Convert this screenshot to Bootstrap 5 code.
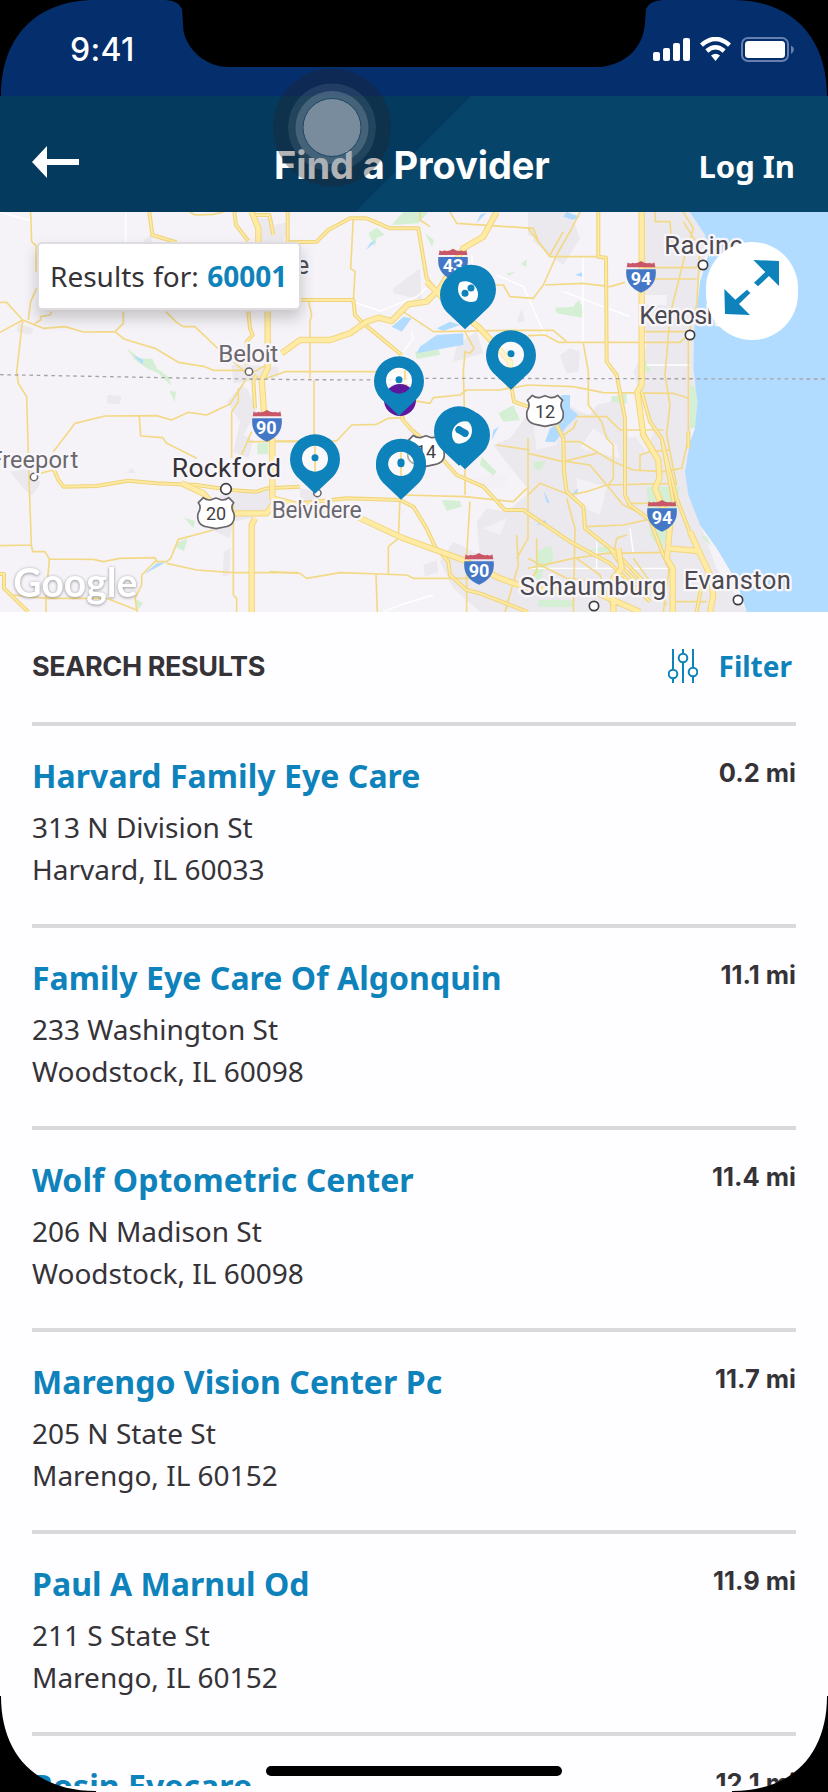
<!DOCTYPE html>
<html lang="en">
<head>
<meta charset="utf-8">
<meta name="viewport" content="width=device-width, initial-scale=1">
<title>Find a Provider</title>
<link href="https://cdn.jsdelivr.net/npm/bootstrap@5.3.0/dist/css/bootstrap.min.css" rel="stylesheet">
<style>
  body { background: #000; color: #353337; font-family: "Noto Sans", sans-serif; }
  .phone { width: 828px; height: 1792px; background: #fefdff; }
  .status { height: 96px; background: #042e6c; color: #fff; flex: none; }
  .clock { font: 500 32px/38px Inter, sans-serif; letter-spacing: .3px; padding: 31px 0 0 70px; }
  .signals { padding: 37px 34px 0 0; box-sizing: content-box; }
  .topbar { height: 116px; flex: none; background: linear-gradient(135deg, transparent 0 50%, #07446a 50%) 356px 0 / 116px 116px no-repeat, linear-gradient(#07446a, #07446a) 471px 0 / 357px 116px no-repeat, #043a5e; color: #fff; padding: 0 33px 0 32px; }
  .page-title { font: 700 38px/46px Inter, sans-serif; letter-spacing: -.1px; padding-top: 46px; margin: 0 0 0 195px; white-space: nowrap; }
  .login { font-weight: 700; font-size: 31px; line-height: 42px; padding-top: 49px; }
  .back { margin-top: 50px; }
  .map { height: 400px; flex: none; }
  .map-label { left: 37px; top: 30px; width: 264px; height: 68px; background: #fff; border: 2px solid #dedcdf; border-radius: 5px; box-shadow: 0 8px 14px rgba(60,60,60,.25); font-size: 28px; line-height: 64px; padding-left: 11px; white-space: nowrap; word-spacing: 1.2px; }
  .expand { left: 706px; top: 30px; width: 92px; height: 98px; border-radius: 46px; background: #fff; border: 0; padding: 0; }
  .accent { color: #0e82ba; }
  .results { height: 1174px; flex: none; padding: 0 32px; }
  .rule { border-bottom: 4px solid #dad9d9; }
  .results-head { height: 114px; }
  .results-title { font: 700 27px/36px Inter, sans-serif; letter-spacing: -.4px; margin: 0; }
  .filter { font-size: 28px; line-height: 40px; font-weight: 700; margin-right: 4px; margin-top: -3px; gap: 21px; }
  .provider { height: 202px; padding-top: 29px; }
  .provider-name { font-size: 32px; line-height: 42px; font-weight: 700; letter-spacing: .05px; color: #0e82ba; margin: 0 0 9px; }
  .provider address { font-size: 28px; line-height: 42px; margin: 0; }
  .distance { font: 700 25.5px/34px Inter, sans-serif; padding-top: 1px; white-space: nowrap; }
  .over { position: absolute; left: 0; top: 0; pointer-events: none; }
  .lbl text { font-family: Roboto, sans-serif; fill: #6a686e; stroke: #f8f6fa; stroke-width: 14px; stroke-linejoin: round; paint-order: stroke; }
  .lbl .city { fill: #4c4a50; }
  .lbl .metro { fill: #353338; }
  .brand { font-family: Lato, sans-serif; font-weight: 700; filter: drop-shadow(0 2px 5px rgba(80,80,90,.65)); }
</style>
</head>
<body>
<div class="phone position-relative overflow-hidden d-flex flex-column">
  <div class="status d-flex justify-content-between align-items-start">
    <div class="clock">9:41</div>
    <svg class="signals" width="141" height="26" viewBox="0 0 141 26" fill="#fff">
      <rect x="0" y="15" width="7" height="9" rx="2"/><rect x="10" y="11" width="7" height="13" rx="2"/><rect x="20" y="6" width="7" height="18" rx="2"/><rect x="30" y="1" width="7" height="23" rx="2"/>
      <g fill="none" stroke="#fff" stroke-width="4.4"><path d="M48.500 8.200Q62.500-4.200 76.500 8.200"/><path d="M53.800 14Q62.500 6.500 71.200 14"/></g>
      <path d="M58 18.600Q62.500 14.800 67 18.600L62.500 24Z"/>
      <rect x="89" y="1" width="46" height="23" rx="6" fill="none" stroke="#667fae" stroke-width="2"/><rect x="92" y="4" width="40" height="17" rx="3.500"/><path d="M138 8.500Q141 10 141 12.500T138 17Z" fill="#667fae"/>
    </svg>
  </div>
  <header class="topbar d-flex align-items-start">
    <svg class="back" width="47" height="34" viewBox="0 0 47 34" fill="#fff"><path d="M0 16L15 0V13H47V19H15V32Z"/></svg>
    <h1 class="page-title">Find a Provider</h1>
    <div class="login ms-auto">Log In</div>
  </header>

  <section class="map position-relative overflow-hidden">
    <svg class="d-block" width="828" height="400" viewBox="0 21 2484 1200" fill="none" stroke-linejoin="round">
      <defs>
        <g id="pin"><path fill-rule="evenodd" fill="#0e82ba" d="M0 105L-54 54A75 75 0 1 1 54 54ZM-39 0A39 39 0 1 0 39 0A39 39 0 1 0-39 0Z"/><circle r="10.500" fill="#0e82ba" cy="-3"/></g>
        <g id="interstate"><path fill="#c95767" d="M-43-28L-40-43Q-33-36-26-42Q-16-36 0-47Q16-36 26-42Q33-36 40-43L43-28Z"/><path fill="#4478c6" d="M-44-22H44Q50 28 0 48Q-50 28-44-22Z"/></g>
        <path id="usroute" fill="#fff" stroke="#68666b" stroke-width="5" d="M-53-33L-38-48Q-29-40-17-41L0-47L17-41Q29-40 38-48L53-33Q42-20 54 0Q60 34 25 40L0 45L-25 40Q-60 34-54 0Q-42-20-53-33Z"/>
        <path id="medium" d="M448 21L457 90L530 112M703 21L708 60L745 108M755 21L760 30H808L820 90M863 21V112L950 110L985 75L1050 40H1100L1170 70H1255L1280 220L1310 260M745 320L750 370L758 390L740 410V480M810 285H1060L1065 330L1090 355L1205 450M1220 495L1205 640L1230 670L1300 730L1330 765L1370 810L1450 845L1515 915H1570L1710 1010L1830 1075L1950 1190M160 790L175 825L190 845L290 843L385 827L470 835L590 840L700 856L770 860L800 850L900 845M770 510L760 525L765 610M0 1107H12V1150L85 1221M900 895L1040 880L1200 885L1240 905L1280 970L1305 1025L1345 1070L1350 1110L1400 1155L1440 1165L1584 1221M1535 550L1542 590L1584 605M1670 660L1690 700L1692 800L1700 860L1750 905L1755 970L1850 1045L1960 1160M1795 21V155L1818 158L1820 470L1850 510L1875 640L1875 870L1890 900L1950 945L1990 1050L2020 1110M1925 560L1950 650L1985 700L2030 880L2080 1010M1985 700L2020 890M2065 680V730M2110 1110L2090 1221M1830 1030L1870 1090L1930 1150"/>
        <path id="motorway" d="M755 21L775 70V112M803 320V490L785 525L792 620M845 445L900 405H990L1050 385L1100 350L1135 338L1175 348L1225 298L1280 290L1320 250L1390 130L1450 95L1490 21M1280 230L1340 290L1440 370L1530 470V550M817 700V880L910 905L1060 930L1210 1000L1390 1065L1500 1120L1584 1150L1700 1160M545 835L610 865L640 900M700 925H800L825 890M765 940L755 960V1221M1925 21V540L1912 560L1930 690L1975 765L1978 820L1965 850L1985 900L2010 960L2005 1020L2000 1060L2018 1090V1221M2070 980L2095 1035L2130 1110L2140 1170L2130 1221M2005 1030L2095 1038M1855 1030L1865 1090L1840 1120V1221M1760 1150L1920 1221"/>
      </defs>
      <rect y="21" width="2484" height="1200" fill="#f5f3f7"/>
      <!-- built-up areas -->
      <g fill="#ebe9ed">
        <path d="M55 355L102 372L92 390L50 380ZM322 570L364 573L360 598L322 595ZM30 800L90 790L122 835L95 872L70 850ZM395 788L408 805L380 805ZM695 480L835 485V515L780 525L700 535ZM745 555L770 620L730 690L760 705L745 760L700 740L720 650L680 590L725 540ZM660 870L810 850L830 880L800 930L700 950L690 1000L625 970ZM672 1040L692 1030L688 1110L668 1115ZM430 110L455 85V115ZM770 40H820V115H770Z"/>
        <path d="M1605 21H1710L1740 100L1690 180L1600 110ZM1180 250L1260 190L1265 285L1180 265ZM1370 420L1430 380L1450 445L1360 470ZM1590 620L1650 570L1740 620L1830 650L1870 900L1960 1000L1920 1221H1440L1360 1150L1320 1070L1360 1010L1440 1050L1430 950L1460 910L1520 920L1590 860L1510 760L1480 720L1530 700ZM1270 1080L1310 1065L1315 1100L1275 1115ZM900 850L950 860L970 890L900 895ZM870 50L850 110H820V60ZM1550 350L1565 310L1575 350Z"/>
        <path d="M1790 600L1870 580L1885 700L1960 680L1930 600L1900 500L1940 420L1930 300H2000V270H1920V21H2075L2125 100L2090 260L2080 470L2090 560L2070 700L2060 800L2080 900L2150 1090L2240 1221H1584V1000L1690 970L1590 890L1710 860L1700 740ZM1584 21H1660L1640 110L1584 90ZM1680 450L1710 430L1740 440L1735 500L1700 505Z"/>
      </g>
      <g fill="#f3f1f5"><path d="M1600 660L1680 645L1670 720L1610 735ZM1420 820L1540 800L1510 850L1435 850ZM1450 970L1520 940L1500 990ZM1730 820L1820 845L1800 930L1730 900ZM1900 690L1960 680L1940 740ZM1780 670L1850 720L1860 760L1740 730Z"/></g>
      <!-- parks -->
      <g fill="#d5efd4">
        <path d="M380 430L420 460L458 462L470 490L505 515L515 543L475 505L440 490L405 465ZM508 557L528 560L524 592ZM552 938L585 948L580 970ZM535 1012L563 1000L552 1038L526 1025ZM772 715H805V748H772ZM405 1180L430 1195L415 1212Z"/>
        <path d="M1175 60L1210 21H1285L1255 55ZM1105 85L1130 68L1155 90L1130 98L1125 125ZM1275 85L1302 105L1296 125ZM1245 440L1315 425L1320 450L1250 462ZM1495 625L1540 600L1560 645L1510 650ZM1445 755L1490 800L1480 812L1440 780ZM1325 885L1380 888L1385 905L1340 918ZM1615 1050L1640 1020L1660 1075L1620 1100ZM1520 205L1548 200L1525 213ZM1563 178L1580 162V185Z"/>
        <path d="M1665 308L1720 305L1735 285L1748 306V338L1670 325ZM1833 575L1880 565V597L1835 590ZM1936 465L1955 500H1930ZM2070 540L2093 550L2088 670H2070ZM1940 845H2040L2030 900L1985 1040L1950 990ZM1600 770L1638 768L1620 797L1602 790ZM1615 1035L1655 1025L1660 1060L1630 1090L1615 1170L1600 1100ZM1615 1185H1718V1206H1615ZM1765 1035L1830 1020V1045ZM2100 990L2120 995L2135 1025Z"/>
      </g>
      <!-- water -->
      <g fill="#b2dcff">
        <path d="M398 450L430 465L428 478ZM432 1108L470 1075L498 1072Z"/>
        <path d="M1175 365L1210 335L1235 340L1205 380ZM1260 425L1310 390L1390 385V420L1320 432L1250 445ZM1310 370L1350 350L1380 360L1330 378ZM1430 55L1440 30L1460 22ZM1098 135L1112 112L1130 108ZM1475 705L1480 675L1496 665ZM1670 600L1685 570H1710V610L1735 630L1700 665L1665 712L1635 710L1650 670L1690 650ZM1700 21L1740 35L1720 45L1690 35ZM1725 210L1745 202L1748 216ZM1630 855L1650 895L1640 892ZM1716 868L1733 850V863ZM1605 960L1635 945L1640 955Z"/>
        <path d="M2070 21H2484V1221H2240L2210 1130L2150 1030L2100 960L2065 870L2055 800L2070 710L2085 670L2092 590L2080 490L2082 380L2100 230L2125 150L2115 90Z"/>
      </g>
      <!-- minor white roads -->
      <path stroke="#fff" stroke-width="4" d="M377 21V115M0 21L95 48M1058 290L1140 318L1250 275L1278 250M1415 150L1420 250M1490 210L1570 245L1635 390M1690 260L1890 335M1749 155V410M1940 480H2070M1584 1090H2010M1790 1010V1090M1890 970L1900 1045M1150 1221L1200 1200L1300 1170M1235 380L1240 400L1210 440"/>
      <!-- secondary roads -->
      <g stroke="#f3d986" stroke-width="5">
        <path d="M92 21L95 110L108 122V200M0 292H20L68 345L130 370L195 365L250 381L345 380L370 355V320M0 382L68 345L50 500L55 535L80 575L88 850L94 1020L98 1040H135L148 1062L138 1180V1221M85 345L92 290L110 250M105 355L122 345V335L150 330L155 320M345 380L372 402L465 430L535 472L615 485L640 496H740M497 320L530 352L550 365H585L690 465M0 1022L94 1020M148 1062L280 1063L310 1070L360 1060L465 1058L470 1070L500 1070L512 1060L535 1003L640 975M40 1170L138 1180H320L410 1215M500 1075L590 1095L700 1103H895M470 1065L425 1110V1140L405 1180L412 1221M160 740L225 655L315 633L470 632L515 645L565 622L620 630L690 597L740 520M418 635L422 693L488 698L500 715L590 760M695 620V760M695 620L715 590V550M745 710H900M755 680L720 760M700 900V1170L710 1180V1221M800 520L855 500H1220M570 21L585 30L640 28L670 21M700 470L745 510L800 480M120 805L160 795"/>
        <path d="M925 285L935 330L930 350V520M942 525V700M810 708H1010L1055 660L1130 658L1165 640L1215 638M1060 38L1052 190L1065 200L1060 290M1200 580L1290 595L1300 578L1380 570L1400 555M1400 555H1500L1584 540M1210 320L1300 380L1530 376H1660L1700 410M1395 380L1422 430L1410 445L1395 440L1390 500L1395 680V870M1350 21L1370 55L1600 70L1615 110L1650 155M1290 65L1260 45V21M1210 870L1395 875L1540 890L1580 850M1410 890L1400 1050V1221M1200 880L1195 1000L1165 1025V1110M810 1100L900 1105L920 1120L1020 1103L1220 1110L1240 1120H1420M1128 1110L1132 1221M1480 240H1510L1530 275L1600 280L1630 240L1670 150L1710 80L1740 21M1515 1221L1555 1080L1550 990M1490 720L1590 735M1584 700V1000L1550 1060"/>
        <path d="M1584 70L1650 155H1795M1650 150L1690 80M1635 240L1750 235L1830 245L1875 232M1584 392L1635 390L1675 412H2000L2040 412L2065 390M1925 380H2060M1966 21V50L2010 50L2015 115M1920 188H2085L2100 180M1940 222H2090M2050 21L2080 70L2055 150L2010 330L1995 510L2010 600L2000 690M2050 50L2100 130L2090 300L2065 390V700L2045 790L1990 800L1900 795L1840 770L1790 740L1740 710H1690M2065 580L2020 565L1810 563L1720 545L1584 540M1750 415L1765 500V600L1805 650L1820 700L1840 720V820L1825 840M1730 635H1820L1860 675H1990M1584 745L1690 770L1790 745M1700 770L1770 780L1870 900L1950 940M1584 870L1620 835L1710 870L1760 860L1820 840L2030 835M1700 880L1725 970L1720 1221M1760 965L1870 960L1960 940M1730 645L1720 670L1690 690M1584 1090L1720 1060L1820 1045L2000 1042M1840 1050L1850 1000L1880 990M1730 1060L1800 1110L1840 1221M1880 895H1960M1920 800V750L1950 740L2010 735M2000 690L2030 840M1610 1000V1100L1584 1130M1584 1060L1640 1090L1700 1120L1810 1130M1900 1060L2000 1200M2010 1070L1990 1221M2010 1190H2120"/>
      </g>
      <!-- major roads and motorways: casing, then fill -->
      <use href="#medium" stroke="#f0d47c" stroke-width="12"/>
      <use href="#medium" stroke="#fdeaa4" stroke-width="5.500"/>
      <use href="#motorway" stroke="#f2d680" stroke-width="19"/>
      <use href="#motorway" stroke="#ffeba3" stroke-width="13"/>
      <path d="M0 509L600 520L900 524L1150 525L1250 520L2484 522" stroke="#a5a3a7" stroke-width="4" stroke-dasharray="11 11"/>
      <!-- shields -->
      <use href="#interstate" x="801" y="662"/><use href="#interstate" x="1359" y="178"/><use href="#interstate" x="1437" y="1091"/><use href="#interstate" x="1923" y="215"/><use href="#interstate" x="1986" y="932"/>
      <use href="#usroute" x="648" y="926"/><use href="#usroute" x="1635" y="619"/><use href="#usroute" x="1278" y="739"/>
      <g font-family="Roboto, sans-serif" text-anchor="middle" font-weight="700" font-size="54" fill="#fff"><text x="799" y="686">90</text><text x="1359" y="202">43</text><text x="1437" y="1116">90</text><text x="1923" y="239">94</text><text x="1986" y="956">94</text></g>
      <g font-family="Roboto, sans-serif" text-anchor="middle" font-size="54" fill="#424044"><text x="648" y="945">20</text><text x="1635" y="639">12</text><text x="1278" y="759">14</text></g>
      <!-- towns -->
      <g fill="#fff" stroke="#67656a" stroke-width="4.500"><circle cx="747" cy="500" r="11"/><circle cx="102" cy="816" r="11"/><circle cx="952" cy="864" r="11"/><g stroke="#3f3d42" stroke-width="5"><circle cx="678" cy="852" r="16"/><circle cx="2109" cy="180" r="14"/><circle cx="2070" cy="390" r="14"/><circle cx="1782" cy="1203" r="14"/><circle cx="2214" cy="1185" r="14"/></g></g>
      <g class="lbl">
        <text x="655" y="472" font-size="73" textLength="180">Beloit</text>
        <text x="-32" y="788" font-size="72" textLength="267">Freeport</text>
        <text x="815" y="938" font-size="69" textLength="270">Belvidere</text>
        <text x="515" y="816" font-size="80" textLength="328" class="metro">Rockford</text>
        <text x="1993" y="147" font-size="77" textLength="236" class="city">Racine</text>
        <text x="1918" y="357" font-size="77" textLength="284" class="city">Kenosha</text>
        <text x="1559" y="1169" font-size="77" textLength="440" class="city">Schaumburg</text>
        <text x="2051" y="1152" font-size="77" textLength="322" class="city">Evanston</text>
        <text x="887" y="208" font-size="76" class="city">e</text>
      </g>
      <text class="brand" x="40" y="1175" font-size="122" textLength="372" lengthAdjust="spacingAndGlyphs" fill="#fff">Google</text>
      <!-- provider pins -->
      <circle cx="1200" cy="585" r="48" fill="#5d189e"/>
      <g fill="#fff" fill-opacity=".45"><circle cx="945" cy="761" r="39"/><circle cx="1203" cy="774" r="39"/><circle cx="1533" cy="448" r="39"/><path d="M1160 537A39 39 0 1 1 1234 537Z" fill-opacity=".8"/><ellipse cx="1404" cy="260" rx="34" ry="34" fill-opacity=".9"/><ellipse cx="1387" cy="683" rx="34" ry="34" fill-opacity=".9"/></g>
      <path d="M945 722V800M1203 735V813M1215 495V525" stroke="#f3d986" stroke-width="5"/>
      <use href="#pin" x="945" y="761"/><use href="#pin" x="1197" y="527"/><use href="#pin" x="1203" y="774"/><use href="#pin" x="1203" y="779"/><use href="#pin" x="1533" y="449"/>
      <use href="#pin" x="1395" y="268"/><use href="#pin" x="1413" y="252"/><use href="#pin" x="1377" y="677"/><use href="#pin" x="1395" y="688"/>
      <path d="M1377 674L1395 685" stroke="#0e82ba" stroke-width="21" stroke-linecap="round"/>
    </svg>
    <div class="map-label position-absolute">Results for: <strong class="accent">60001</strong></div>
    <button class="expand position-absolute" aria-label="Expand map"><svg class="d-block" width="92" height="98" viewBox="534 111 276 294" fill="#0e82ba"><path d="M676 165L753 168V243L723 213L690 244L678 233L712 201ZM589 252L622 284L657 254L667 264L633 297L666 330L591 327Z"/></svg></button>
  </section>

  <main class="results overflow-hidden">
    <div class="results-head rule d-flex align-items-center justify-content-between">
      <h2 class="results-title">SEARCH RESULTS</h2>
      <a class="filter d-flex align-items-center accent text-decoration-none" href="#"><svg width="30" height="34" viewBox="0 0 30 34" fill="#fff" stroke="#0e82ba" stroke-width="2"><path d="M5 0V34M15 0V34M25 0V34"/><circle cx="5" cy="25" r="4.300"/><circle cx="15" cy="9" r="4.300"/><circle cx="25" cy="23" r="4.300"/></svg><span>Filter</span></a>
    </div>
    <article class="provider rule d-flex justify-content-between"><div><h3 class="provider-name">Harvard Family Eye Care</h3><address>313 N Division St<br>Harvard, IL 60033</address></div><div class="distance">0.2 mi</div></article>
    <article class="provider rule d-flex justify-content-between"><div><h3 class="provider-name">Family Eye Care Of Algonquin</h3><address>233 Washington St<br>Woodstock, IL 60098</address></div><div class="distance">11.1 mi</div></article>
    <article class="provider rule d-flex justify-content-between"><div><h3 class="provider-name">Wolf Optometric Center</h3><address>206 N Madison St<br>Woodstock, IL 60098</address></div><div class="distance">11.4 mi</div></article>
    <article class="provider rule d-flex justify-content-between"><div><h3 class="provider-name">Marengo Vision Center Pc</h3><address>205 N State St<br>Marengo, IL 60152</address></div><div class="distance">11.7 mi</div></article>
    <article class="provider rule d-flex justify-content-between"><div><h3 class="provider-name">Paul A Marnul Od</h3><address>211 S State St<br>Marengo, IL 60152</address></div><div class="distance">11.9 mi</div></article>
    <article class="provider d-flex justify-content-between"><div><h3 class="provider-name">Rosin Eyecare</h3></div><div class="distance">12.1 mi</div></article>
  </main>

  <!-- touch control, device notch, corners and home indicator -->
  <svg class="over" width="828" height="1792" viewBox="0 0 828 1792">
    <circle cx="332" cy="127.500" r="59" fill="#232427" fill-opacity=".34"/>
    <circle cx="332" cy="127.500" r="44" fill="#8aa0b5" fill-opacity=".17"/>
    <circle cx="332" cy="127.500" r="36.500" fill="#9fb2c2" fill-opacity=".28"/>
    <circle cx="332" cy="127.500" r="29" fill="#9ba8b7" fill-opacity=".6" stroke="#1d4766" stroke-width="1"/>
    <path d="M166 0Q179 1 182 9L183.500 31C187 49 205 67 229 67H601C625 64 643 49 645 23L646 9Q649 1 662 0Z"/>
    <path d="M0 0H96C33 0 1 40 1 96H0ZM828 0H732C795 0 827 40 827 96H828ZM0 1792V1696H1C1 1752 33 1791 96 1791V1792ZM828 1792V1696H827C827 1752 795 1791 732 1791V1792Z"/>
    <rect x="266" y="1766" width="296" height="10" rx="5"/>
  </svg>
</div>
<script src="https://cdn.jsdelivr.net/npm/bootstrap@5.3.0/dist/js/bootstrap.bundle.min.js"></script>
</body>
</html>
